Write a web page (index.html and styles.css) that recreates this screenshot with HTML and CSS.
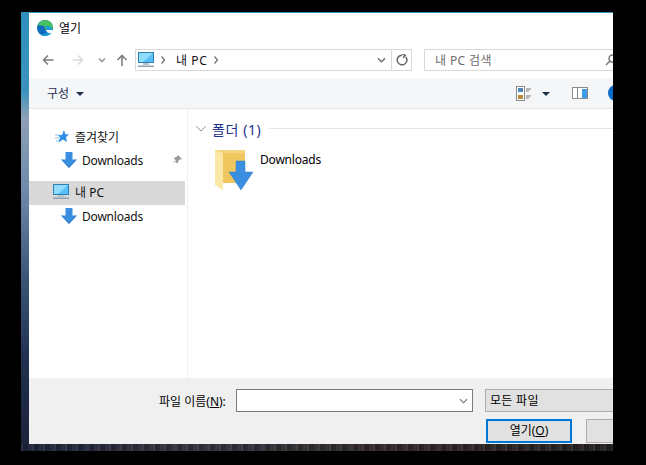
FILE: index.html
```html
<!DOCTYPE html>
<html lang="ko">
<head>
    <meta charset="UTF-8">
    <title>열기</title>
    <link rel="stylesheet" href="styles.css">
</head>
<body>
    <svg class="defs" width="0" height="0">
        <symbol id="down-arrow" viewBox="0 0 16 16">
            <path d="M4.500 0h7v7.500H16L8 16 0 7.500h4.500z" fill="#3b8fe0"/>
            <path d="M8 16 0 7.500h1.500L8 14l6.500-6.500H16z" fill="#2a75c4" opacity=".6"/>
        </symbol>
        <symbol id="pc" viewBox="0 0 16 16">
            <rect x="0.5" y="0.5" width="15" height="10" fill="#58c0f5" stroke="#2f7fb5"/>
            <path d="M1 1h14L5 10H1z" fill="#8fdcfb"/>
            <rect x="5" y="11" width="6" height="2" fill="#b5c4cf"/>
            <rect x="0" y="13.500" width="16" height="1.500" fill="#8fa3b3"/>
        </symbol>
    </svg>

    <div class="desktop">
        <div class="window">
            <div class="titlebar">
                <svg class="edge-icon" viewBox="0 0 16 16">
                    <circle cx="8" cy="8" r="8" fill="#0f6cbd"/>
                    <path d="M1 5C2.500 2 5 0 8 0c4.500 0 8 3.500 8 8.500 0 1-.5 1.500-1.500 1.500H8.500c0-3-1.500-4.500-3.500-4.500-1.500 0-3 .0-4 -.5z" fill="#46c25f"/>
                    <path d="M8.500 6c2.500-.5 5 .5 7.500 3-1 4-4 7-8 7-1.500 0-3-.5-4-1.500 3 .5 6-1 6-3C10 9.500 9 8 8.500 6z" fill="#1a9ae0"/>
                    <path d="M9 10h7c-.3 1-.8 2-1.500 3-2.500.5-5-.5-5.500-3z" fill="#fff"/>
                </svg>
                <span>열기</span>
            </div>

            <div class="navbar">
                <svg class="nav-btn back" viewBox="0 0 12 12"><path d="M11.500 6H1.500M6 1.500 1.500 6 6 10.500" /></svg>
                <svg class="nav-btn forward" viewBox="0 0 12 12"><path d="M.5 6h10M6 1.500 10.500 6 6 10.500" /></svg>
                <svg class="nav-btn recent" viewBox="0 0 8 6"><path d="M1 1.500 4 4.500 7 1.500" /></svg>
                <svg class="nav-btn up" viewBox="0 0 12 12"><path d="M6 12V1.500M1.500 6 6 1.500 10.500 6" /></svg>

                <div class="address">
                    <svg class="address-pc"><use href="#pc"/></svg>
                    <svg class="crumb-arrow" viewBox="0 0 4 8"><path d="M.5.5 3.500 4 .5 7.500"/></svg>
                    <span class="crumb">내 PC</span>
                    <svg class="crumb-arrow second" viewBox="0 0 4 8"><path d="M.5.5 3.500 4 .5 7.500"/></svg>
                    <svg class="address-drop" viewBox="0 0 10 6"><path d="M1 1l4 4 4-4" /></svg>
                    <div class="refresh">
                        <svg viewBox="0 0 12 12"><path d="M9.800 3A4.800 4.800 0 1 1 6 1.200M6.500 0l2.800 1.500L7 3.800" /></svg>
                    </div>
                </div>

                <div class="search">
                    <span>내 PC 검색</span>
                    <svg viewBox="0 0 12 12"><circle cx="7.500" cy="4.500" r="3.500"/><path d="M5 7 1 11"/></svg>
                </div>
            </div>

            <div class="toolbar">
                <span class="organize">구성</span>
                <span class="caret"></span>
                <div class="toolbar-right">
                    <svg class="view-icon" viewBox="0 0 15 15">
                        <rect x=".5" y=".5" width="8" height="14" fill="#fff" stroke="#8a8a8a"/>
                        <rect x="2" y="2" width="5" height="4" fill="#4f87b5"/>
                        <rect x="2" y="9" width="5" height="4" fill="#b98a3c"/>
                        <path d="M10 3h5M10 5h3M10 10h5M10 12h3" stroke="#777" fill="none"/>
                    </svg>
                    <span class="caret view-caret"></span>
                    <svg class="pane-icon" viewBox="0 0 16 12">
                        <rect x=".5" y=".5" width="15" height="11" fill="#fff" stroke="#8a8a8a"/>
                        <rect x="5" y="1" width="1" height="10" fill="#8a8a8a"/>
                        <rect x="10" y="2" width="5" height="9" fill="#3d9be9"/>
                    </svg>
                    <span class="help"></span>
                </div>
            </div>

            <div class="main">
                <nav class="sidebar">
                    <div class="side-row favorites">
                        <svg class="star" viewBox="0 0 14 14">
                            <path d="M9 0l1.400 4.300 3.600.2-3 2.800 1 4.700-4-2.500-4.500 3 1.500-5L3 5h4z" fill="#2f8fe6"/>
                            <path d="M0 5h4M0 8h4M1 11h3" stroke="#8cc4f2"/>
                        </svg>
                        <span>즐겨찾기</span>
                    </div>
                    <div class="side-row download">
                        <svg class="arrow"><use href="#down-arrow"/></svg>
                        <span>Downloads</span>
                        <svg class="pin" viewBox="0 0 10 10"><path d="M6 0l4 4-1 .5-1.500 0L6 6.500V8L4.500 8 2.500 6 0 10 .5 9 4 5.500 2 3.500V2.500h1.500L5.500 1z" fill="#9a9a9a"/></svg>
                    </div>
                    <div class="side-row this-pc">
                        <svg class="side-pc"><use href="#pc"/></svg>
                        <span>내 PC</span>
                    </div>
                    <div class="side-row download">
                        <svg class="arrow"><use href="#down-arrow"/></svg>
                        <span>Downloads</span>
                    </div>
                </nav>

                <section class="content">
                    <div class="group-head">
                        <svg viewBox="0 0 10 6"><path d="M.5.5 5 5 9.500.5" /></svg>
                        <span>폴더 (1)</span>
                        <div class="group-line"></div>
                    </div>
                    <div class="folder">
                        <svg class="folder-icon" viewBox="0 0 38 40">
                            <path d="M0 0h30v33H8L7 29H0z" fill="#f4d47f"/>
                            <path d="M8 3h22v30H8z" fill="#efc75e"/>
                            <path d="M0 0l8 3.500V40L0 35z" fill="#fbe7a6"/>
                            <path d="M21 11h9v11h8L26 40 14 22h7z" fill="#3b8fe0" stroke="#2f7cc9" stroke-width=".5"/>
                        </svg>
                        <span>Downloads</span>
                    </div>
                </section>
            </div>

            <div class="footer">
                <div class="file-row">
                    <label>파일 이름(<u>N</u>):</label>
                    <div class="file-input">
                        <svg viewBox="0 0 10 6"><path d="M1 1l4 4 4-4" /></svg>
                    </div>
                    <div class="file-type">모든 파일</div>
                </div>
                <div class="button-row">
                    <div class="btn primary">열기(<u>O</u>)</div>
                    <div class="btn"></div>
                </div>
            </div>
        </div>
    </div>
</body>
</html>
```

FILE: styles.css
```css
* {
    margin: 0;
    padding: 0;
    box-sizing: border-box;
    font-family: "Noto Sans", "Noto Sans CJK KR", sans-serif;
}

html, body {
    width: 646px;
    height: 465px;
    overflow: hidden;
    background-color: #000;
}

.defs {
    display: block;
}

svg {
    display: block;
    flex: none;
    fill: none;
}

span, label {
    white-space: nowrap;
}

.desktop {
    width: 592px;
    height: 439px;
    margin: 12px 0 0 21px;
    padding: 1px 0 7px 8px;
    background:
        repeating-linear-gradient(90deg, rgba(255, 255, 255, 0.08) 0 2px, rgba(0, 0, 0, 0.1) 2px 7px, rgba(255, 255, 255, 0.03) 7px 11px) left bottom / 100% 7px no-repeat,
        linear-gradient(90deg, #1c2238 0, #33303a 30%, #2e2626 70%, #241f1f 100%) left bottom / 100% 7px no-repeat,
        linear-gradient(180deg, #2f8fbd 0, #3a93bd 18%, #8d9fb5 24%, #6f8bab 40%, #3c5778 60%, #1f2f4d 80%, #1c2238 100%);
}

.window {
    width: 584px;
    height: 431px;
    background-color: #fff;
    display: flex;
    flex-direction: column;
    overflow: hidden;
    font-size: 12px;
    color: #000;
}

.titlebar {
    height: 31px;
    flex: none;
    display: flex;
    align-items: center;
    padding: 0 0 2px 8px;
}

.edge-icon {
    width: 16px;
    height: 16px;
    margin-right: 6px;
}

.navbar {
    height: 34px;
    flex: none;
    display: flex;
    align-items: flex-start;
    padding: 5px 0 0 13px;
}

.nav-btn {
    stroke-width: 1.6;
}

.back {
    width: 12px;
    height: 12px;
    margin-top: 5px;
    stroke: #7e7e7e;
}

.forward {
    width: 12px;
    height: 12px;
    margin: 5px 0 0 18px;
    stroke: #dcdcdc;
}

.recent {
    width: 8px;
    height: 6px;
    margin: 8px 0 0 14px;
    stroke: #9a9a9a;
}

.up {
    width: 12px;
    height: 12px;
    margin: 5px 0 0 10px;
    stroke: #7e7e7e;
}

.address {
    width: 277px;
    height: 22px;
    flex: none;
    margin-left: 7px;
    border: 1px solid #d9d9d9;
    display: flex;
    align-items: center;
    padding-left: 2px;
}

.address-pc {
    width: 16px;
    height: 16px;
}

.crumb-arrow {
    width: 4px;
    height: 8px;
    margin-left: 7px;
    stroke: #777;
    stroke-width: 1.3;
}

.crumb-arrow.second {
    margin-left: 8px;
}

.crumb {
    width: 30px;
    margin-left: 11px;
    letter-spacing: 0.6px;
    color: #111;
}

.address-drop {
    width: 9px;
    height: 6px;
    margin-left: 159px;
    stroke: #6e6e6e;
    stroke-width: 1.5;
}

.refresh {
    width: 21px;
    height: 20px;
    flex: none;
    margin-left: 5px;
    border-left: 1px solid #d9d9d9;
    display: flex;
    align-items: center;
    justify-content: center;
}

.refresh svg {
    width: 12px;
    height: 12px;
    stroke: #666;
    stroke-width: 1.5;
}

.search {
    width: 200px;
    height: 22px;
    flex: none;
    margin-left: 12px;
    border: 1px solid #d9d9d9;
    display: flex;
    align-items: center;
    padding-left: 10px;
    color: #6d6d6d;
    letter-spacing: 0.4px;
}

.search span {
    width: 60px;
}

.search svg {
    width: 12px;
    height: 12px;
    margin-left: 110px;
    stroke: #777;
    stroke-width: 1.5;
}

.toolbar {
    height: 31px;
    flex: none;
    display: flex;
    align-items: center;
    padding-left: 18px;
    background-color: #f5f6f7;
    border-bottom: 1px solid #e6e6e6;
}

.organize {
    width: 23px;
    color: #1e3250;
}

.caret {
    width: 0;
    height: 0;
    flex: none;
    margin: 1px 0 0 7px;
    border-left: 4px solid transparent;
    border-right: 4px solid transparent;
    border-top: 4px solid #1e3250;
}

.toolbar-right {
    display: flex;
    align-items: center;
    flex: none;
    margin-left: 432px;
}

.view-icon {
    width: 15px;
    height: 15px;
}

.view-caret {
    margin-left: 11px;
}

.pane-icon {
    width: 16px;
    height: 12px;
    margin-left: 22px;
}

.help {
    width: 16px;
    height: 16px;
    flex: none;
    margin-left: 20px;
    border-radius: 50%;
    background-color: #0b6cc7;
}

.main {
    flex: 1;
    display: flex;
    min-height: 0;
}

.sidebar {
    width: 159px;
    flex: none;
    padding-top: 15px;
    border-right: 1px solid #f0f0f0;
}

.side-row {
    display: flex;
    align-items: center;
    height: 24px;
    color: #111;
}

.favorites {
    padding: 2px 0 0 26px;
}

.star {
    width: 14px;
    height: 14px;
    margin-right: 6px;
}

.download {
    padding-left: 32px;
}

.download span {
    letter-spacing: -0.2px;
}

.arrow {
    width: 16px;
    height: 16px;
    margin-right: 5px;
}

.pin {
    width: 10px;
    height: 10px;
    margin-left: 29px;
}

.this-pc {
    width: 156px;
    margin-top: 9px;
    margin-bottom: -1px;
    padding: 0 0 2px 24px;
    background-color: #d9d9d9;
}

.side-pc {
    width: 16px;
    height: 16px;
    margin-right: 6px;
}

.content {
    flex: 1;
    padding: 11px 0 0 8px;
}

.group-head {
    display: flex;
    align-items: center;
    height: 17px;
    color: #1e3287;
    font-size: 14px;
    letter-spacing: 0.6px;
}

.group-head svg {
    width: 10px;
    height: 6px;
    margin-right: 6px;
    stroke: #8a8a8a;
}

.group-line {
    flex: 1;
    height: 1px;
    margin-left: 8px;
    background-color: #e5e5e5;
}

.folder {
    display: flex;
    align-items: flex-start;
    margin: 13px 0 0 19px;
}

.folder-icon {
    width: 38px;
    height: 40px;
}

.folder span {
    margin: 1px 0 0 7px;
    line-height: 18px;
    letter-spacing: -0.2px;
}

.footer {
    height: 66px;
    flex: none;
    background-color: #f0f0f0;
    padding-top: 11px;
}

.file-row {
    display: flex;
    align-items: center;
    height: 23px;
    padding-left: 130px;
}

.file-row label {
    width: 77px;
    flex: none;
}

.file-input {
    width: 237px;
    height: 23px;
    flex: none;
    background-color: #fff;
    border: 1px solid #7a7a7a;
    display: flex;
    align-items: center;
    justify-content: flex-end;
    padding-right: 4px;
}

.file-input svg {
    width: 9px;
    height: 6px;
    stroke: #6e6e6e;
    stroke-width: 1.2;
}

.file-type {
    width: 140px;
    height: 23px;
    flex: none;
    margin-left: 12px;
    padding-left: 4px;
    line-height: 21px;
    background-color: #e1e1e1;
    border: 1px solid #adadad;
    letter-spacing: 0.3px;
    white-space: nowrap;
}

.button-row {
    display: flex;
    margin: 7px 0 0 457px;
}

.btn {
    width: 86px;
    height: 24px;
    flex: none;
    background-color: #e1e1e1;
    border: 1px solid #adadad;
    text-align: center;
    line-height: 20px;
    margin-right: 14px;
}

.btn.primary {
    border: 2px solid #0078d7;
}
```
